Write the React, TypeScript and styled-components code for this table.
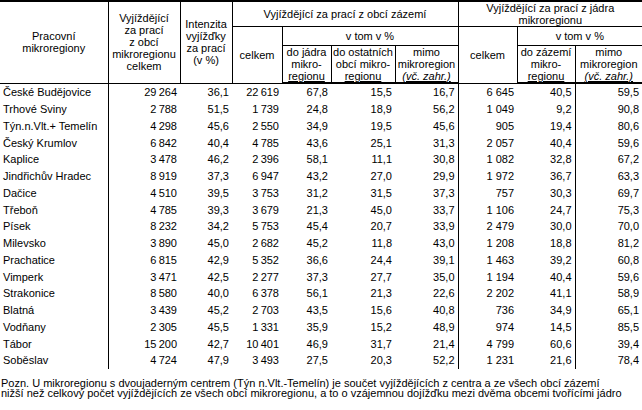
import React from 'react';
import styled, { createGlobalStyle } from 'styled-components';

// Types
type Row = [string, string, string, string, string, string, string, string, string, string];

// Data
const ROWS: Row[] = [
  ['České Budějovice', '29\u2009264', '36,1', '22\u2009619', '67,8', '15,5', '16,7', '6 645', '40,5', '59,5'],
  ['Trhové Sviny', '2\u2009788', '51,5', '1\u2009739', '24,8', '18,9', '56,2', '1 049', '9,2', '90,8'],
  ['Týn.n.Vlt.+ Temelín', '4\u2009298', '45,6', '2\u2009550', '34,9', '19,5', '45,6', '905', '19,4', '80,6'],
  ['Český Krumlov', '6\u2009842', '40,4', '4\u2009785', '43,6', '25,1', '31,3', '2 057', '40,4', '59,6'],
  ['Kaplice', '3\u2009478', '46,2', '2\u2009396', '58,1', '11,1', '30,8', '1 082', '32,8', '67,2'],
  ['Jindřichův Hradec', '8\u2009919', '37,3', '6\u2009947', '43,2', '27,0', '29,9', '1 972', '36,7', '63,3'],
  ['Dačice', '4\u2009510', '39,5', '3\u2009753', '31,2', '31,5', '37,3', '757', '30,3', '69,7'],
  ['Třeboň', '4\u2009785', '39,3', '3\u2009679', '21,3', '45,0', '33,7', '1 106', '24,7', '75,3'],
  ['Písek', '8\u2009232', '34,2', '5\u2009753', '45,4', '20,7', '33,9', '2 479', '30,0', '70,0'],
  ['Milevsko', '3\u2009890', '45,0', '2\u2009682', '45,2', '11,8', '43,0', '1 208', '18,8', '81,2'],
  ['Prachatice', '6\u2009815', '42,9', '5\u2009352', '36,6', '24,4', '39,1', '1 463', '39,2', '60,8'],
  ['Vimperk', '3\u2009471', '42,5', '2\u2009277', '37,3', '27,7', '35,0', '1 194', '40,4', '59,6'],
  ['Strakonice', '8\u2009580', '40,0', '6\u2009378', '56,1', '21,3', '22,6', '2 202', '41,1', '58,9'],
  ['Blatná', '3\u2009439', '45,2', '2\u2009703', '43,5', '15,6', '40,8', '736', '34,9', '65,1'],
  ['Vodňany', '2\u2009305', '45,5', '1\u2009331', '35,9', '15,2', '48,9', '974', '14,5', '85,5'],
  ['Tábor', '15\u2009200', '42,7', '10\u2009401', '46,9', '31,7', '21,4', '4 799', '60,6', '39,4'],
  ['Soběslav', '4\u2009724', '47,9', '3\u2009493', '27,5', '20,3', '52,2', '1 231', '21,6', '78,4'],
];

const COL_WIDTHS = [108, 72, 52, 50, 49, 64, 63, 59, 58, 67];

// columns (by index) that carry a vertical rule in the body
const BODY_RULES = [0, 6, 8];

// Global
const GlobalStyle = createGlobalStyle`
  html, body {
    margin: 0;
    padding: 0;
    background: #ffffff;
  }
  body {
    font-family: "Liberation Sans", Arial, sans-serif;
    font-size: 11px;
    color: #000000;
  }
`;

// Styled Components
const Page = styled.div`
  width: 642px;
  height: 410px;
  overflow: hidden;
  background: #ffffff;
`;

const Table = styled.table`
  width: 642px;
  border-collapse: collapse;
  table-layout: fixed;
  border-top: 2px solid #000;
`;

const HeadCell = styled.th<{ $last?: boolean; $h?: number }>`
  font-weight: normal;
  font-size: 11px;
  line-height: 12px;
  text-align: center;
  vertical-align: middle;
  padding: 0 1px;
  border: 1px solid #000;
  border-top: none;
  border-left: none;
  ${({ $last }) => ($last ? 'border-right: none;' : '')}
  ${({ $h }) => ($h ? `height: ${$h}px;` : '')}
  white-space: nowrap;
  overflow: hidden;
`;

const HeadRowBottom = styled.tr`
  & > th {
    border-bottom: 2px solid #000;
  }
`;

const HeadGroupRow = styled.tr``;

const Under = styled.span`
  text-decoration: underline;
`;

const Italic = styled.i`
  font-style: italic;
`;

const BodyRow = styled.tr`
  height: 16.75px;
`;

const Cell = styled.td<{ $rule?: boolean; $name?: boolean }>`
  padding: 0 3px 0 ${({ $name }) => ($name ? '3px' : '0')};
  font-size: 11px;
  line-height: 12px;
  height: 16.75px;
  text-align: ${({ $name }) => ($name ? 'left' : 'right')};
  vertical-align: middle;
  white-space: nowrap;
  border-right: ${({ $rule }) => ($rule ? '1px solid #000' : 'none')};
`;

const Note = styled.p`
  margin: 9px 0 0 1px;
  font-size: 11px;
  line-height: 10.5px;
  white-space: nowrap;
`;

// Component
const App: React.FC = () => {
  return (
    <Page>
      <GlobalStyle />
      <Table>
        <colgroup>
          {COL_WIDTHS.map((w, i) => (
            <col key={i} style={{ width: w }} />
          ))}
        </colgroup>
        <thead>
          <HeadGroupRow>
            <HeadCell rowSpan={3} $h={26}>
              Pracovní
              <br />
              mikroregiony
            </HeadCell>
            <HeadCell rowSpan={3}>
              Vyjíždějící
              <br />
              za prací
              <br />
              z obcí
              <br />
              mikroregionu
              <br />
              celkem
            </HeadCell>
            <HeadCell rowSpan={3}>
              Intenzita
              <br />
              vyjížďky
              <br />
              za prací
              <br />
              (v %)
            </HeadCell>
            <HeadCell colSpan={4}>Vyjíždějící za prací z obcí zázemí</HeadCell>
            <HeadCell colSpan={3} $last>
              Vyjíždějící za prací z jádra
              <br />
              mikroregionu
            </HeadCell>
          </HeadGroupRow>
          <HeadGroupRow>
            <HeadCell rowSpan={2}>celkem</HeadCell>
            <HeadCell colSpan={3} $h={18}>
              v tom v %
            </HeadCell>
            <HeadCell rowSpan={2}>celkem</HeadCell>
            <HeadCell colSpan={2} $last>
              v tom v %
            </HeadCell>
          </HeadGroupRow>
          <HeadRowBottom>
            <HeadCell $h={34}>
              do jádra
              <br />
              mikro-
              <br />
              <Under>regionu</Under>
            </HeadCell>
            <HeadCell>
              do ostatních
              <br />
              obcí mikro-
              <br />
              <Under>regionu</Under>
            </HeadCell>
            <HeadCell>
              mimo
              <br />
              mikroregion
              <br />
              <Under>
                <Italic>(vč. zahr.)</Italic>
              </Under>
            </HeadCell>
            <HeadCell>
              do zázemí
              <br />
              mikro-
              <br />
              <Under>regionu</Under>
            </HeadCell>
            <HeadCell $last>
              mimo
              <br />
              mikroregion
              <br />
              <Under>
                <Italic>(vč. zahr.)</Italic>
              </Under>
            </HeadCell>
          </HeadRowBottom>
        </thead>
        <tbody>
          {ROWS.map((row) => (
            <BodyRow key={row[0]}>
              {row.map((value, i) => (
                <Cell key={i} $name={i === 0} $rule={BODY_RULES.includes(i)}>
                  {value}
                </Cell>
              ))}
            </BodyRow>
          ))}
        </tbody>
      </Table>
      <Note>
        Pozn. U mikroregionu s dvoujaderným centrem (Týn n.Vlt.-Temelín) je součet vyjíždějících z centra a ze všech obcí zázemí
        <br />
        nižší než celkový počet vyjíždějících ze všech obcí mikroregionu, a to o vzájemnou dojížďku mezi dvěma obcemi tvořícími jádro
      </Note>
    </Page>
  );
};

export default App;
